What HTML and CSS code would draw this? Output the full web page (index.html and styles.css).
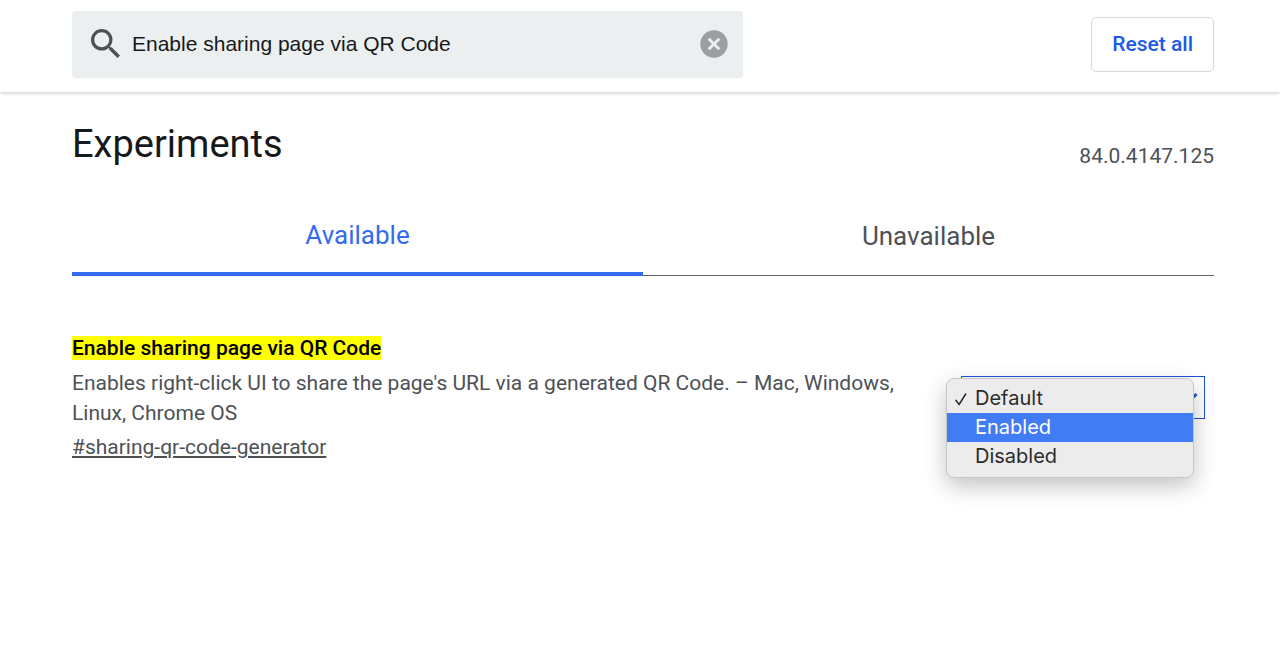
FILE: index.html
```html
<!DOCTYPE html>
<html lang="en">
<head>
<meta charset="utf-8">
<meta name="viewport" content="width=device-width, initial-scale=1">
<title>Experiments</title>
<link rel="stylesheet" href="styles.css">
</head>
<body>
<header class="toolbar">
  <div class="search">
    <svg class="search-icon" viewBox="3 3 17.5 17.5" aria-hidden="true"><path fill="currentColor" d="M15.5 14h-.79l-.28-.27A6.471 6.471 0 0 0 16 9.5 6.5 6.5 0 1 0 9.5 16c1.61 0 3.09-.59 4.23-1.57l.27.28v.79l5 4.99L20.490 19l-4.99-5zm-6 0C7.010 14 5 11.990 5 9.500S7.010 5 9.500 5 14 7.010 14 9.500 11.990 14 9.500 14z"/></svg>
    <input class="search-input" type="text" aria-label="Search flags" value="Enable sharing page via QR Code">
    <button class="clear" type="button" aria-label="Clear search">
      <svg class="clear-icon" viewBox="0 0 28 28" aria-hidden="true"><circle cx="14" cy="14" r="13.700" fill="#9b9fa2"/><path d="M8.700 8.700l10.600 10.600M19.300 8.700L8.700 19.300" stroke="#ebeff0" stroke-width="3" fill="none"/></svg>
    </button>
  </div>
  <button class="reset" type="button">Reset all</button>
</header>
<main class="content">
  <div class="heading">
    <h1 class="title">Experiments</h1>
    <span class="version">84.0.4147.125</span>
  </div>
  <div class="tabs" role="tablist">
    <button class="tab tab-selected" type="button" role="tab" aria-selected="true">Available</button>
    <button class="tab" type="button" role="tab" aria-selected="false">Unavailable</button>
  </div>
  <section class="experiment">
    <div class="details">
      <h2 class="name"><mark class="match">Enable sharing page via QR Code</mark></h2>
      <p class="description">Enables right-click UI to share the page's URL via a generated QR Code. – Mac, Windows, Linux, Chrome OS</p>
      <a class="permalink" href="#sharing-qr-code-generator">#sharing-qr-code-generator</a>
    </div>
    <div class="picker">
      <select class="state" aria-label="Enable sharing page via QR Code">
        <option selected>Default</option>
        <option>Enabled</option>
        <option>Disabled</option>
      </select>
      <svg class="chevron" viewBox="0 0 14 10" aria-hidden="true"><path d="M1.500 2l5.500 5.500L12.500 2" fill="none" stroke="#1a53d8" stroke-width="3"/></svg>
      <div class="menu" role="listbox" aria-label="Experiment state">
        <button class="item" type="button" role="option" aria-selected="true">
          <svg class="check" viewBox="0 0 14 14" aria-hidden="true"><path d="M1.800 8.300l3.300 4.200L11.700 2" fill="none" stroke="currentColor" stroke-width="1.500" stroke-linecap="round" stroke-linejoin="round"/></svg>
          <span class="label">Default</span>
        </button>
        <button class="item item-active" type="button" role="option" aria-selected="false"><span class="label">Enabled</span></button>
        <button class="item" type="button" role="option" aria-selected="false"><span class="label">Disabled</span></button>
      </div>
    </div>
  </section>
</main>
</body>
</html>
```
FILE: styles.css
```css
* {
  box-sizing: border-box;
}

body {
  min-height: 100vh;
  margin: 0;
  background: #fff;
  color: #4d5156;
  font-family: Roboto, "Liberation Sans", sans-serif;
  font-size: 21px;
  line-height: 30px;
}

button,
input,
select {
  margin: 0;
  padding: 0;
  border: 0;
  background: none;
  color: inherit;
  font: inherit;
}

.toolbar {
  display: flex;
  align-items: center;
  justify-content: space-between;
  padding: 11px 66px 14px 72px;
  box-shadow: 0 1px 4px rgba(0, 0, 0, 0.22);
}

.search {
  display: flex;
  align-items: center;
  flex: 0 1 671px;
  padding: 17px 15px 19px 19px;
  border-radius: 4px;
  background: #ebeff0;
}

.search-icon {
  flex: none;
  width: 29px;
  height: 29px;
  margin-right: 12px;
  color: #4d5156;
}

.search-input {
  flex: 1;
  min-width: 0;
  height: 31px;
  outline: 0;
  color: #17181a;
  font-family: "Liberation Sans", Arial, sans-serif;
  font-size: 21px;
}

.clear,
.clear-icon {
  display: block;
  width: 28px;
  height: 28px;
}

.reset {
  padding: 11px 20px 12px;
  border: 1px solid #d5d7dd;
  border-radius: 5px;
  color: #1a5ae8;
  font-weight: 500;
}

.content {
  padding: 27px 66px 0 72px;
}

.heading {
  display: flex;
  align-items: flex-end;
  justify-content: space-between;
}

.title {
  margin: 0;
  color: #17181a;
  font-size: 38px;
  font-weight: 400;
  line-height: 50px;
}

.version {
  margin-bottom: -2px;
}

.tabs {
  display: grid;
  grid-template-columns: 1fr 1fr;
  margin-top: 35px;
}

.tab {
  height: 72px;
  padding-bottom: 7px;
  border-bottom: 1px solid #5f6368;
  font-size: 26px;
}

.tab-selected {
  border-bottom: 4px solid #326bf0;
  color: #326bf0;
}

.experiment {
  display: flex;
  justify-content: space-between;
  align-items: flex-start;
  padding: 57px 9px 0 0;
}

.details {
  flex: 0 1 840px;
}

.name {
  margin: 0 0 5px;
  font-size: 21px;
  font-weight: 500;
}

.match {
  background: #ff0;
  color: #000;
}

.description {
  margin: 0 0 4px;
}

.permalink {
  color: inherit;
}

.picker {
  position: relative;
  flex: 0 0 244px;
  margin-top: 43px;
}

.state {
  display: block;
  width: 100%;
  height: 43px;
  padding: 0 30px 0 12px;
  border: 1px solid #1a53d8;
  border-radius: 0;
  appearance: none;
  background: #fff;
  color: #1a53d8;
}

.chevron {
  position: absolute;
  top: 16px;
  right: 7px;
  width: 14px;
  height: 10px;
}

.menu {
  position: absolute;
  top: 2px;
  left: -15px;
  width: 248px;
  padding: 5px 0 6px;
  border: 1px solid #c6c6c7;
  border-radius: 8px;
  background: #ececed;
  box-shadow: 0 8px 22px rgba(0, 0, 0, 0.24);
}

.item {
  display: flex;
  align-items: center;
  width: 100%;
  height: 29px;
  padding: 0 0 2px 28px;
  color: #2b2b2c;
  font-family: Inter, Roboto, sans-serif;
  font-size: 20px;
  line-height: 24px;
}

.item-active {
  background: #427cf4;
  color: #fff;
}

.check {
  width: 14px;
  height: 14px;
  margin: 2px 7px 0 -21px;
}
```
